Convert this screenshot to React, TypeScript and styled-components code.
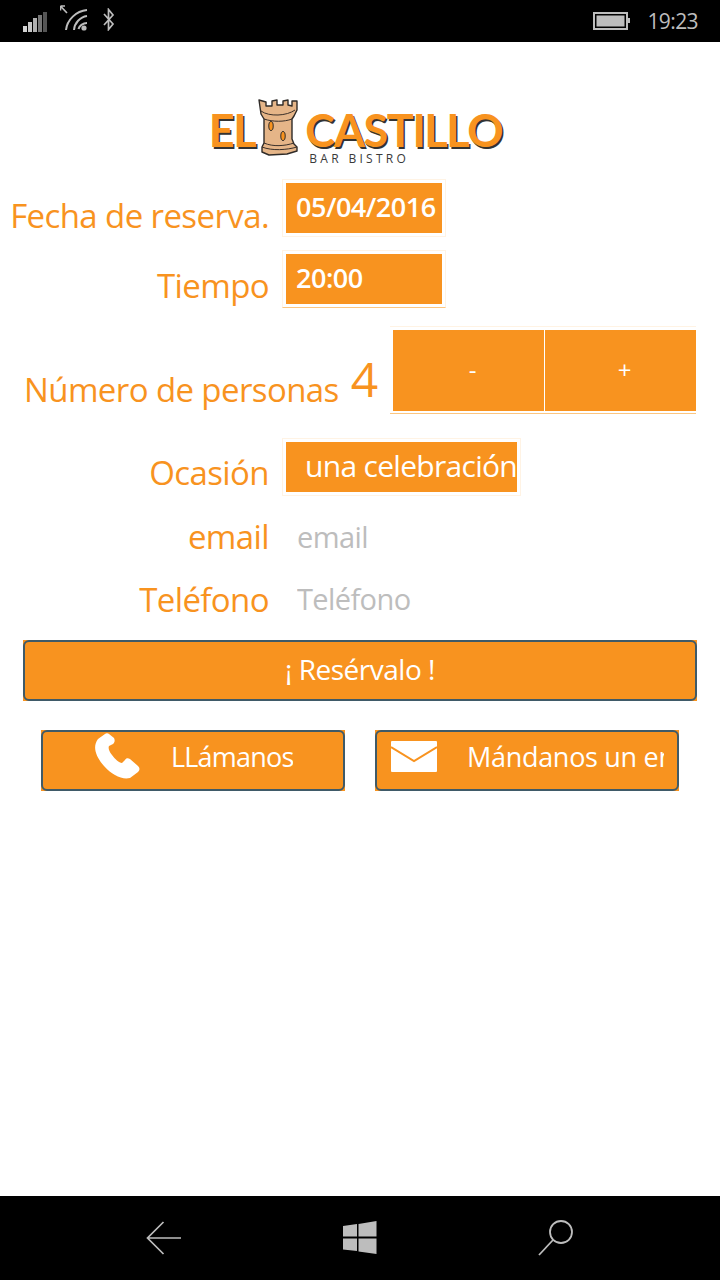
import React from 'react';
import styled, { createGlobalStyle } from 'styled-components';

const orange = '#f8931f';

const GlobalStyle = createGlobalStyle`
  html, body {
    margin: 0;
    padding: 0;
    background: #fff;
    font-family: "Open Sans", "Noto Sans", sans-serif;
  }
`;

const Screen = styled.div`
  width: 720px;
  height: 1280px;
  display: flex;
  flex-direction: column;
  overflow: hidden;
`;

const StatusBar = styled.div`
  height: 42px;
  background: #000;
  color: #bdbdbd;
  display: flex;
  align-items: center;
  padding: 0 22px 0 23px;
  box-sizing: border-box;
  flex: none;
`;

const StatusLeft = styled.div`
  display: flex;
  align-items: flex-start;
  gap: 12px;
  flex: 1;
`;

const Clock = styled.span`
  font-size: 21px;
  letter-spacing: -0.6px;
  margin-left: 17px;
`;

const Main = styled.main`
  flex: 1;
  display: flex;
  flex-direction: column;
`;

const LogoWrap = styled.div`
  height: 137px;
  display: flex;
  justify-content: center;
  align-items: flex-start;
  padding: 55px 0 0 0;
  box-sizing: border-box;
  gap: 2px;
  margin-left: -9px;
`;

const LogoText = styled.span`
  font-family: "Lato", sans-serif;
  font-weight: 700;
  font-size: 45px;
  line-height: 44px;
  color: ${orange};
  text-shadow: 1.5px 2px 0 #333;
  letter-spacing: -1.4px;
  margin-top: 11px;
`;

const LogoRight = styled.div`
  display: flex;
  flex-direction: column;
  align-items: center;
  margin-left: 4px;
`;

const Tagline = styled.span`
  font-family: "Open Sans", sans-serif;
  font-size: 12px;
  line-height: 13px;
  letter-spacing: 3.3px;
  color: #3a3a3a;
  margin-top: 0;
  align-self: flex-start;
  padding-left: 4px;
`;

const Row = styled.div<{ $top?: number }>`
  display: flex;
  align-items: flex-start;
  margin-top: ${p => p.$top ?? 0}px;
`;

const Label = styled.label<{ $pad?: number }>`
  width: 269px;
  flex: none;
  text-align: right;
  font-size: 33px;
  line-height: 42px;
  letter-spacing: -0.6px;
  color: ${orange};
  white-space: nowrap;
  padding-top: ${p => p.$pad ?? 15}px;
`;

const FieldFrame = styled.div<{ $underline?: boolean }>`
  margin-left: 13px;
  padding: 3px;
  border: 1px solid #fff3e4;
  border-bottom-color: ${p => (p.$underline ? '#fcc680' : '#fff3e4')};
`;

const Field = styled.div<{ $width: number; $pad?: number }>`
  width: ${p => p.$width}px;
  height: 50px;
  background: ${orange};
  color: #fff;
  font-size: 27px;
  font-weight: 600;
  line-height: 48px;
  letter-spacing: -0.5px;
  padding-left: ${p => p.$pad ?? 10}px;
  box-sizing: border-box;
  overflow: hidden;
  white-space: nowrap;
`;

const OccasionField = styled(Field)`
  font-size: 30px;
  font-weight: 400;
  letter-spacing: -0.7px;
`;

const PeopleLabel = styled.span`
  margin-left: 24px;
  font-size: 33px;
  line-height: 42px;
  letter-spacing: -0.6px;
  color: ${orange};
  white-space: nowrap;
  padding-top: 43px;
`;

const Count = styled.span`
  margin-left: 12px;
  font-size: 48px;
  line-height: 56px;
  color: ${orange};
  padding-top: 25px;
`;

const StepFrame = styled.div`
  margin-left: 12px;
  padding: 3px 0 2px 3px;
  border-top: 1px solid #fff3e4;
  border-bottom: 1px solid #fcc680;
  display: flex;
  gap: 1px;
`;

const Step = styled.button`
  width: 151px;
  height: 81px;
  border: none;
  padding: 0 0 2px 8px;
  background: ${orange};
  color: #fff;
  font-family: inherit;
  font-size: 24px;
`;

const PlainInput = styled.input<{ $top: number }>`
  margin-left: 28px;
  width: 380px;
  border: none;
  outline: none;
  background: transparent;
  font-family: inherit;
  font-size: 29px;
  line-height: 42px;
  height: 42px;
  letter-spacing: -0.6px;
  padding: 0;
  margin-top: ${p => p.$top}px;
  color: #333;
  &::placeholder {
    color: #bdbdbd;
    opacity: 1;
  }
`;

const ActionButton = styled.button`
  display: block;
  position: relative;
  height: 61px;
  box-sizing: border-box;
  background: ${orange};
  border: none;
  color: #fff;
  font-family: inherit;
  font-size: 27px;
  letter-spacing: -0.5px;
  padding: 0 0 3px;

  &::after {
    content: '';
    position: absolute;
    inset: 0;
    border: 2px solid #3f5a68;
    border-radius: 6px;
  }
`;

const ReserveButton = styled(ActionButton)`
  width: 674px;
  margin: 19px 0 0 23px;
  font-size: 28px;
`;

const ContactRow = styled.div`
  display: flex;
  gap: 30px;
  margin: 29px 0 0 41px;
`;

const ContactButton = styled(ActionButton)`
  width: 304px;
  display: flex;
  align-items: center;
  overflow: hidden;
  white-space: nowrap;
  padding-bottom: 9px;
`;

const ContactIcon = styled.span<{ $left: number; $width: number }>`
  display: flex;
  flex: none;
  margin-left: ${p => p.$left}px;
  width: ${p => p.$width}px;
`;

const ContactLabel = styled.span<{ $clip?: number }>`
  display: block;
  overflow: hidden;
  letter-spacing: ${p => (p.$clip ? -0.3 : -0.8)}px;
  ${p => (p.$clip ? `width: ${p.$clip}px;` : '')}
`;

const NavBar = styled.nav`
  height: 84px;
  flex: none;
  background: #000;
  display: flex;
  align-items: center;
  box-sizing: border-box;
  padding: 0 146px;
  justify-content: space-between;
`;

const WindowsWrap = styled.span`
  display: flex;
  margin-right: 1px;
`;

const SignalIcon = () => (
  <svg width="25" height="20" viewBox="0 0 25 20" style={{ marginTop: 1 }}>
    <rect x="0" y="14" width="4" height="6" fill="#d4d4d4" />
    <rect x="5" y="10" width="4" height="10" fill="#c8c8c8" />
    <rect x="10" y="6" width="4" height="14" fill="#b0b0b0" />
    <rect x="15" y="3" width="4" height="17" fill="#777" />
    <rect x="20" y="0" width="4" height="20" fill="#555" />
  </svg>
);

const WifiIcon = () => (
  <svg width="28" height="26" viewBox="0 0 28 26" fill="none" stroke="#bdbdbd" strokeWidth="1.6" style={{ marginTop: -6 }}>
    <path d="M0.5 1 L7 8 M0.5 1 H5 M0.5 1 V5.5" />
    <path d="M6 25 C7 15 16 6 27 5" strokeWidth="2" />
    <path d="M14 25 C14.5 18 20 12 27 11" strokeWidth="2" />
    <path d="M18.5 24 C19 21 23 18 27 18" strokeWidth="2" />
    <circle cx="24" cy="23" r="2.6" fill="#bdbdbd" stroke="none" />
  </svg>
);

const BluetoothIcon = () => (
  <svg width="12" height="23" viewBox="0 0 12 23" fill="none" stroke="#bdbdbd" strokeWidth="1.7" style={{ marginTop: -3, marginLeft: 3 }}>
    <path d="M1 6 L10 16 L5.5 21.5 V1.5 L10 7 L1 17" />
  </svg>
);

const BatteryIcon = () => (
  <svg width="37" height="18" viewBox="0 0 37 18">
    <rect x="1" y="1" width="33" height="16" fill="none" stroke="#bdbdbd" strokeWidth="2" />
    <rect x="3.5" y="3.5" width="28" height="11" fill="#bdbdbd" />
    <rect x="35" y="6" width="2" height="5" fill="#bdbdbd" />
  </svg>
);

const TowerIcon = () => (
  <svg width="42" height="59" viewBox="0 0 42 59">
    <path
      d="M2 3 L9 5 L9 9 L15 9 L15 4 L20 3 L20 8 L26 8 L26 4 L31 3 L31 8 L35 9 L35 4 L40 4 L40 13 L37 19 L35 22 L35 42 L37 47 L40 50 L40 54 L30 57 L12 58 L5 55 L5 50 L7 46 L7 42 L7 22 L4 17 Z"
      fill="#e5b588"
      stroke="#2f2b28"
      strokeWidth="1.4"
      strokeLinejoin="round"
    />
    <path d="M4 14 C12 20 30 19 38 13 M7 22 C16 25 27 25 35 22 M7 46 C16 50 28 49 37 46 M5 50 C15 54 30 53 40 50" fill="none" stroke="#3a302a" strokeWidth="1" />
    <ellipse cx="14" cy="29" rx="2.2" ry="4.5" fill={orange} stroke="#2f2b28" strokeWidth="1" />
    <ellipse cx="26" cy="39" rx="2.2" ry="4.5" fill={orange} stroke="#2f2b28" strokeWidth="1" />
  </svg>
);

const PhoneIcon = () => (
  <svg width="46" height="46" viewBox="0 0 46 46">
    <path
      d="M11 1 L4 6 C-2 14 2 24 10 33 C18 42 28 47 36 45 L44 39 C46 37 46 35 44 33 L36 26 C34 25 32 25 31 27 L28 30 C25 30 21 26 18 22 C15 18 14 15 15 13 L19 11 C21 9 21 7 20 5 L15 1 C14 0 12 0 11 1 Z"
      fill="#fff"
    />
  </svg>
);

const MailIcon = () => (
  <svg width="46" height="31" viewBox="0 0 46 31">
    <rect x="0" y="0" width="46" height="31" rx="1" fill="#fff" />
    <path d="M0 6 L23 20 L46 6" fill="none" stroke={orange} strokeWidth="2" />
  </svg>
);

const BackIcon = () => (
  <svg width="36" height="34" viewBox="0 0 36 34" fill="none" stroke="#bdbdbd" strokeWidth="1.7">
    <path d="M35 17 H2 M17.5 1 L1.5 17 L17.5 33" />
  </svg>
);

const WindowsIcon = () => (
  <svg width="34" height="34" viewBox="0 0 34 34" fill="#bdbdbd">
    <path d="M0 5 L14 3 V15.5 H0 Z M15.5 3 L33.5 0 V15.5 H15.5 Z M0 17.5 H14 V30 L0 28.5 Z M15.5 17.5 H33.5 V33 L15.5 30.5 Z" />
  </svg>
);

const SearchIcon = () => (
  <svg width="36" height="36" viewBox="0 0 36 36" fill="none" stroke="#bdbdbd" strokeWidth="1.8">
    <circle cx="23" cy="12" r="11" />
    <path d="M15 20 L1 35" />
  </svg>
);

const App: React.FC = () => {
  return (
    <Screen>
      <GlobalStyle />
      <StatusBar>
        <StatusLeft>
          <SignalIcon />
          <WifiIcon />
          <BluetoothIcon />
        </StatusLeft>
        <BatteryIcon />
        <Clock>19:23</Clock>
      </StatusBar>
      <Main>
        <LogoWrap>
          <LogoText>EL</LogoText>
          <TowerIcon />
          <LogoRight>
            <LogoText>CASTILLO</LogoText>
            <Tagline>BAR BISTRO</Tagline>
          </LogoRight>
        </LogoWrap>
        <Row>
          <Label $pad={16}>Fecha de reserva.</Label>
          <FieldFrame>
            <Field $width={156}>05/04/2016</Field>
          </FieldFrame>
        </Row>
        <Row $top={13}>
          <Label>Tiempo</Label>
          <FieldFrame $underline>
            <Field $width={156}>20:00</Field>
          </FieldFrame>
        </Row>
        <Row $top={18}>
          <PeopleLabel>Número de personas</PeopleLabel>
          <Count>4</Count>
          <StepFrame>
            <Step>-</Step>
            <Step>+</Step>
          </StepFrame>
        </Row>
        <Row $top={24}>
          <Label $pad={14}>Ocasión</Label>
          <FieldFrame>
            <OccasionField $width={231} $pad={19}>una celebración</OccasionField>
          </FieldFrame>
        </Row>
        <Row $top={16}>
          <Label $pad={4}>email</Label>
          <PlainInput $top={4} placeholder="email" />
        </Row>
        <Row $top={17}>
          <Label $pad={4}>Teléfono</Label>
          <PlainInput $top={3} placeholder="Teléfono" />
        </Row>
        <ReserveButton>¡ Resérvalo !</ReserveButton>
        <ContactRow>
          <ContactButton>
            <ContactIcon $left={53} $width={77}><PhoneIcon /></ContactIcon>
            <ContactLabel>LLámanos</ContactLabel>
          </ContactButton>
          <ContactButton>
            <ContactIcon $left={16} $width={76}><MailIcon /></ContactIcon>
            <ContactLabel $clip={197}>Mándanos un email</ContactLabel>
          </ContactButton>
        </ContactRow>
      </Main>
      <NavBar>
        <BackIcon />
        <WindowsWrap><WindowsIcon /></WindowsWrap>
        <SearchIcon />
      </NavBar>
    </Screen>
  );
};

export default App;
